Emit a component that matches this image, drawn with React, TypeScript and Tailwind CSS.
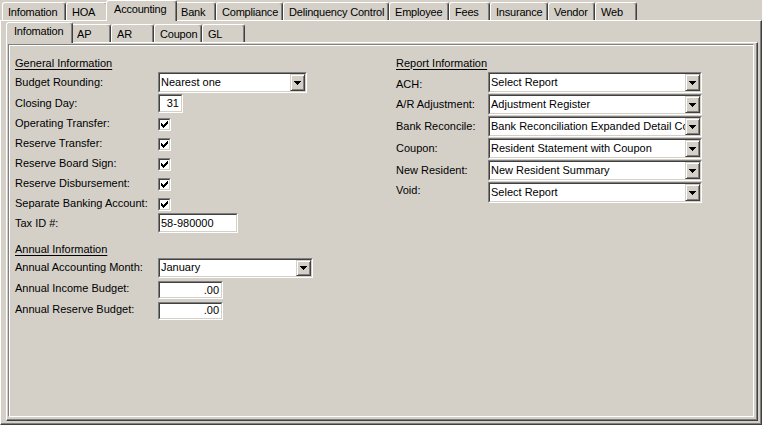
import React from "react";

const Sunken = ({ className, children }: { className: string; children?: React.ReactNode }) => (
  <div className={`border-t border-l border-[#808080] border-r border-b border-r-white border-b-white ${className}`}>
    <div className="h-full w-full border-t border-l border-[#404040] border-r border-b border-r-[#d4d0c8] border-b-[#d4d0c8] bg-white flex items-center">
      {children}
    </div>
  </div>
);

const DropBtn = () => (
  <div className="w-[15px] h-full border-t border-l border-[#d4d0c8] border-r border-b border-r-[#404040] border-b-[#404040] bg-[#d4d0c8] shadow-[inset_1px_1px_0_#fff,inset_-1px_-1px_0_#808080] flex items-center justify-center shrink-0">
    <svg width="7" height="4" viewBox="0 0 7 4" shapeRendering="crispEdges">
      <rect x="0" y="0" width="7" height="1" fill="#000" />
      <rect x="1" y="1" width="5" height="1" fill="#000" />
      <rect x="2" y="2" width="3" height="1" fill="#000" />
      <rect x="3" y="3" width="1" height="1" fill="#000" />
    </svg>
  </div>
);

const Select = ({ className, text }: { className: string; text: string }) => (
  <Sunken className={className}>
    <div className="flex-1 overflow-hidden whitespace-nowrap pl-[1px] leading-none">{text}</div>
    <DropBtn />
  </Sunken>
);

const TextBox = ({ className, text, right }: { className: string; text: string; right?: boolean }) => (
  <Sunken className={className}>
    <div className={right ? "flex-1 text-right pr-[2px] leading-none" : "flex-1 pl-[1px] leading-none"}>{text}</div>
  </Sunken>
);

const checkPixels: [number, number][] = [
  [0, 2], [0, 3], [0, 4], [1, 3], [1, 4], [1, 5], [2, 4], [2, 5], [2, 6],
  [3, 3], [3, 4], [3, 5], [4, 2], [4, 3], [4, 4], [5, 1], [5, 2], [5, 3],
  [6, 0], [6, 1], [6, 2],
];

const Check = () => (
  <Sunken className="w-[13px] h-[13px]">
    <div className="w-full h-full flex items-center justify-center">
      <svg width="7" height="7" viewBox="0 0 7 7" shapeRendering="crispEdges">
        {checkPixels.map(([x, y]) => (
          <rect key={`${x}-${y}`} x={x} y={y} width="1" height="1" fill="#000" />
        ))}
      </svg>
    </div>
  </Sunken>
);

type TabDef = { label: string; w: string; sel?: boolean };

const Tab = ({ t }: { t: TabDef }) =>
  t.sel ? (
    <div
      className={`relative z-10 -mx-[2px] -mb-[1px] h-[21px] ${t.w} bg-[#d4d0c8] border-t border-l border-white border-r border-r-[#404040] rounded-t-[3px] shadow-[inset_-1px_0_0_#808080] flex items-center justify-start pl-[7px] pb-[3px] whitespace-nowrap tracking-[-0.2px]`}
    >
      {t.label}
    </div>
  ) : (
    <div
      className={`h-[18px] ${t.w} bg-[#d4d0c8] border-t border-l border-white border-r border-r-[#404040] rounded-t-[3px] shadow-[inset_-1px_0_0_#808080] flex items-center justify-start pl-[5px] pt-[1px] whitespace-nowrap tracking-[-0.2px]`}
    >
      {t.label}
    </div>
  );

const topTabs: TabDef[] = [
  { label: "Infomation", w: "w-[64px]" },
  { label: "HOA", w: "w-[42px]" },
  { label: "Accounting", w: "w-[71px]", sel: true },
  { label: "Bank", w: "w-[41px]" },
  { label: "Compliance", w: "w-[67px]" },
  { label: "Delinquency Control", w: "w-[106px]" },
  { label: "Employee", w: "w-[60px]" },
  { label: "Fees", w: "w-[41px]" },
  { label: "Insurance", w: "w-[58px]" },
  { label: "Vendor", w: "w-[47px]" },
  { label: "Web", w: "w-[42px]" },
];

const innerTabs: TabDef[] = [
  { label: "Infomation", w: "w-[67px]", sel: true },
  { label: "AP", w: "w-[40px]" },
  { label: "AR", w: "w-[43px]" },
  { label: "Coupon", w: "w-[48px]" },
  { label: "GL", w: "w-[43px]" },
];

const Label = ({ children }: { children: React.ReactNode }) => (
  <div className="w-[143px] shrink-0 leading-none whitespace-nowrap">{children}</div>
);

const RLabel = ({ children, cls }: { children: React.ReactNode; cls?: string }) => (
  <div className={`w-[92px] shrink-0 leading-none whitespace-nowrap ${cls ?? ""}`}>{children}</div>
);

const checkRows = [
  "Operating Transfer:",
  "Reserve Transfer:",
  "Reserve Board Sign:",
  "Reserve Disbursement:",
  "Separate Banking Account:",
];

const reports: { label: string; value: string; cls?: string }[] = [
  { label: "ACH:", value: "Select Report", cls: "pt-[4px]" },
  { label: "A/R Adjustment:", value: "Adjustment Register", cls: "pt-[1px]" },
  { label: "Bank Reconcile:", value: "Bank Reconciliation Expanded Detail Comparison", cls: "pt-[1px]" },
  { label: "Coupon:", value: "Resident Statement with Coupon", cls: "pt-[1px]" },
  { label: "New Resident:", value: "New Resident Summary", cls: "pt-[1px]" },
  { label: "Void:", value: "Select Report", cls: "-mt-[3px]" },
];

export default function App() {
  return (
    <div className="w-[762px] h-[425px] bg-[#d4d0c8] font-['Liberation_Sans',Arial,sans-serif] text-[11px] text-black overflow-hidden flex flex-col">
      <div className="flex items-end h-[20px] pl-[2px]">
        {topTabs.map((t) => (
          <Tab key={t.label} t={t} />
        ))}
      </div>
      <div className="flex-1 flex flex-col border-t border-l border-white border-r border-b border-r-[#404040] border-b-[#404040] shadow-[inset_-1px_-1px_0_#808080] pl-[5px] pr-[3px] pt-[1px] pb-[3px]">
        <div className="flex items-end h-[20px] pl-[2px]">
          {innerTabs.map((t) => (
            <Tab key={t.label} t={t} />
          ))}
        </div>
        <div className="flex-1 flex flex-col border-t border-l border-white border-r border-b border-r-[#404040] border-b-[#404040] shadow-[inset_-1px_-1px_0_#808080] pl-[1px] pt-[1px] pr-[3px] pb-[3px]">
          <div className="flex-1 flex border-t border-l border-[#808080] border-r border-b border-r-white border-b-white shadow-[inset_1px_1px_0_#fff] pl-[6px] pt-[10px]">
            {/* Left column */}
            <div className="w-[381px] shrink-0 flex flex-col">
              <div className="h-[16px] flex items-center leading-none underline underline-offset-[2px]">General Information</div>
              <div className="h-[22px] flex items-center">
                <Label>Budget Rounding:</Label>
                <Select className="w-[149px] h-[21px] mt-[1px]" text="Nearest one" />
              </div>
              <div className="h-[20px] flex items-center">
                <Label>Closing Day:</Label>
                <TextBox className="w-[25px] h-[19px] mt-[1px]" text="31" right />
              </div>
              {checkRows.map((r) => (
                <div key={r} className="h-[20px] flex items-center">
                  <Label>{r}</Label>
                  <div className="mt-[2px]">
                    <Check />
                  </div>
                </div>
              ))}
              <div className="h-[20px] flex items-center">
                <Label>Tax ID #:</Label>
                <TextBox className="w-[80px] h-[20px]" text="58-980000" />
              </div>
              <div className="h-[16px] mt-[8px] flex items-center leading-none underline underline-offset-[2px]">Annual Information</div>
              <div className="h-[21px] flex items-center">
                <Label>Annual Accounting Month:</Label>
                <Select className="w-[155px] h-[20px]" text="January" />
              </div>
              <div className="h-[21px] flex items-center">
                <Label>Annual Income Budget:</Label>
                <TextBox className="w-[65px] h-[18px] mt-[3px]" text=".00" right />
              </div>
              <div className="h-[21px] flex items-center">
                <Label>Annual Reserve Budget:</Label>
                <TextBox className="w-[65px] h-[18px] mt-[2px]" text=".00" right />
              </div>
            </div>
            {/* Right column */}
            <div className="flex flex-col">
              <div className="h-[16px] flex items-center leading-none underline underline-offset-[2px]">Report Information</div>
              {reports.map((r) => (
                <div key={r.label} className="h-[22px] flex items-center">
                  <RLabel cls={r.cls}>{r.label}</RLabel>
                  <Select className="w-[214px] h-[21px] mt-[1px]" text={r.value} />
                </div>
              ))}
            </div>
          </div>
        </div>
      </div>
    </div>
  );
}
